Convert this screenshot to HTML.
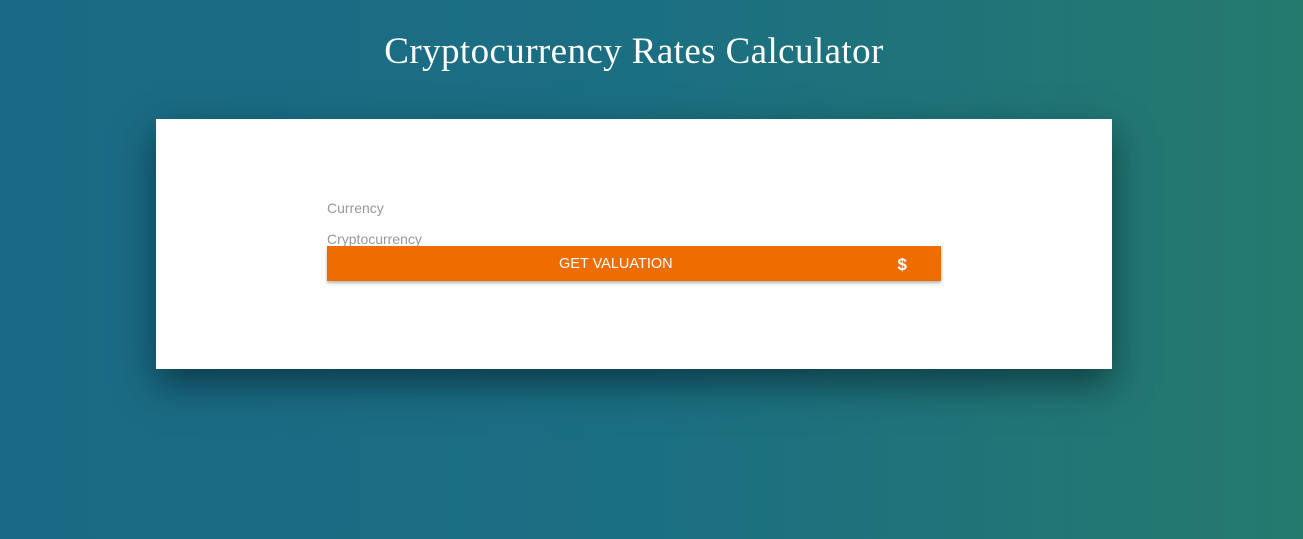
<!DOCTYPE html>
<html><head><style>
html,body{margin:0;padding:0;width:1303px;height:539px;overflow:hidden}
body{background:linear-gradient(90deg,#1a6a85 0%,#1b6f82 50%,#257a6e 100%);font-family:"Liberation Sans",sans-serif;position:relative}
h1{position:absolute;top:30px;left:0;width:1268px;text-align:center;margin:0;font-family:"Liberation Serif",serif;font-weight:normal;font-size:37px;letter-spacing:0.4px;color:#fff}
.card{position:absolute;left:156px;top:119px;width:956px;height:250px;background:#fff;box-shadow:0 15px 35px rgba(0,20,30,.55)}
.l{position:absolute;left:171px;font-size:14px;color:#999}
.btn{position:absolute;left:171px;top:127px;width:614px;height:35px;background:#ef6c00;color:#fff;box-shadow:0 2px 3px rgba(0,0,0,.3);font-size:14.5px;line-height:37px}
.t{position:absolute;left:232px;top:0}
.d{position:absolute;right:34px;top:0;font-weight:bold;font-size:17px}
</style></head><body>
<h1>Cryptocurrency Rates Calculator</h1>
<div class="card">
<div class="l" style="top:81px">Currency</div>
<div class="l" style="top:112px">Cryptocurrency</div>
<div class="btn"><span class="t">GET VALUATION</span><span class="d">$</span></div>
</div>
</body></html>
